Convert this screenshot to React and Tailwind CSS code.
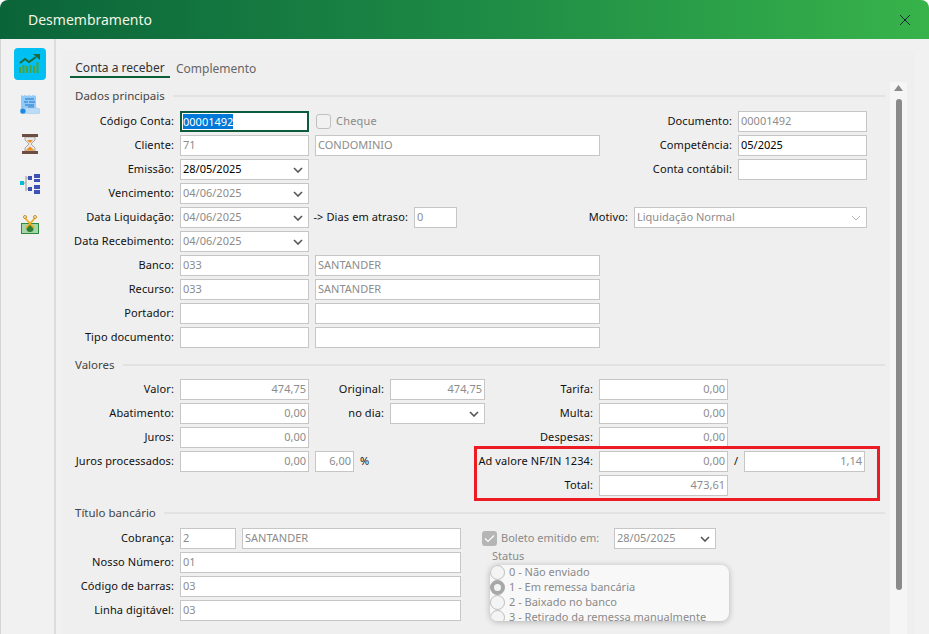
import React from 'react';

const Chevron = ({ light }) => (
  <svg width="10" height="6" viewBox="0 0 10 6" className="shrink-0">
    <path d="M1 1l4 4 4-4" fill="none" stroke={light ? '#b5b5b5' : '#555'} strokeWidth={light ? 1 : 1.6} />
  </svg>
);

const Field = ({ w, value, active, right, select, light, className = '' }) => (
  <div
    className={`h-[21px] shrink-0 flex items-center justify-between bg-white border border-[#c6c6c6] px-[2px] text-[11px] whitespace-nowrap overflow-hidden ${active ? 'text-black' : 'text-[#8c8c8c]'} ${className}`}
    style={{ width: w }}
  >
    {right ? <span className="ml-auto">{value}</span> : <span>{value}</span>}
    {select && <span className="mr-[3px] flex"><Chevron light={light} /></span>}
  </div>
);

const Label = ({ w, children, className = '' }) => (
  <div className={`shrink-0 text-right pr-[6px] text-[11px] tracking-[0.1px] text-[#111] whitespace-nowrap ${className}`} style={{ width: w }}>
    {children}
  </div>
);

const Row = ({ children }) => <div className="flex items-center h-[21px] mb-[3px]">{children}</div>;

const Section = ({ title, className = '' }) => (
  <div className={`flex items-center h-[18px] pl-[12px] ${className}`}>
    <span className="text-[11.5px] text-[#444] whitespace-nowrap">{title}</span>
    <div className="flex-1 h-[2px] bg-[#e2e2e2] ml-[8px]" />
  </div>
);

const Radio = ({ label, on }) => (
  <div className="flex items-center h-[15px] shrink-0">
    <span className={`w-[15px] h-[15px] rounded-full bg-[#f4f4f4] shrink-0 ${on ? 'border-[4px] border-[#a8a8a8]' : 'border border-[#bcbcbc]'}`} />
    <span className="ml-[4px] text-[11px] text-[#8a8a8a] whitespace-nowrap">{label}</span>
  </div>
);

const ChartIcon = () => (
  <svg width="22" height="20" viewBox="0 0 22 20">
    <path d="M1 19v-6M4.500 19v-8M8 19v-7M11.500 19v-8M15 19v-7M18.500 19v-11" stroke="#4aa23a" strokeWidth="2" />
    <path d="M1 9l5-4 4 3 7-5" fill="none" stroke="#1f6b35" strokeWidth="2" />
    <path d="M14 0h7v6z" fill="#1f6b35" />
  </svg>
);

const ScrollIcon = () => (
  <svg width="20" height="20" viewBox="0 0 20 20">
    <path d="M1 1l2 1 2-1 2 1 2-1 2 1 2-1 2 1 1-1v15H1z" fill="#90caf9" />
    <path d="M5 5h9M4 8h4M9 8h6M5 11h9M8 13h6" stroke="#1e73c8" strokeWidth="1.2" />
    <rect x="0" y="14" width="20" height="6" rx="3" fill="#bbdcf7" stroke="#a8c4dc" strokeWidth="0.6" />
    <circle cx="3" cy="17" r="2.600" fill="#1e88e5" />
  </svg>
);

const HourglassIcon = () => (
  <svg width="16" height="20" viewBox="0 0 16 20">
    <path d="M3 3h10v3l-4 4 4 4v3H3v-3l4-4-4-4z" fill="#e8e8e8" stroke="#a8a8a8" />
    <path d="M5 6h6l-3 3z" fill="#f28c1c" />
    <path d="M3.500 16.500l4.500-4 4.500 4z" fill="#f28c1c" />
    <rect width="16" height="3" fill="#6d4c41" />
    <rect y="17" width="16" height="3" fill="#6d4c41" />
  </svg>
);

const TreeIcon = () => (
  <svg width="20" height="20" viewBox="0 0 20 20">
    <rect y="7" width="4" height="4" fill="#00bcd4" />
    <path d="M4 9h2M6 2v15M6 4h2M6 15h2" stroke="#b5b5b5" strokeWidth="1.500" fill="none" />
    <g fill="#3f51b5">
      <rect x="8" y="2" width="4" height="4" />
      <rect x="8" y="13" width="4" height="4" />
      <rect x="14" y="0" width="6" height="4" />
      <rect x="14" y="5" width="6" height="3" />
      <rect x="14" y="11" width="6" height="4" />
      <rect x="14" y="16" width="6" height="4" />
    </g>
  </svg>
);

const MoneyIcon = () => (
  <svg width="18" height="19" viewBox="0 0 18 19">
    <rect x="0.500" y="8.500" width="17" height="10" fill="#a5d6a7" stroke="#2e8b3d" />
    <circle cx="9" cy="13.500" r="3.500" fill="#2e7d32" />
    <path d="M4 3l9 10M14 3L5 13" stroke="#f2a91f" strokeWidth="1.800" />
    <circle cx="4" cy="2" r="1.500" fill="none" stroke="#c98d1a" />
    <circle cx="14" cy="2" r="1.500" fill="none" stroke="#c98d1a" />
  </svg>
);

export default function App() {
  return (
    <div className="w-[929px] h-[634px] overflow-hidden bg-white font-['Noto_Sans',sans-serif]">
      <div className="h-full flex flex-col rounded-t-[8px] overflow-hidden bg-[#f1f1f1]">
        {/* title bar */}
        <div className="h-[39px] shrink-0 flex items-center justify-between pl-[28px] pr-[18px] bg-gradient-to-r from-[#0a6439] via-[#1d8a45] to-[#37b34a]">
          <span className="text-[14px] text-[#f3f5e6]">Desmembramento</span>
          <svg width="12" height="12" viewBox="0 0 12 12">
            <path d="M1 1l10 10M11 1L1 11" stroke="#123" strokeWidth="1" />
          </svg>
        </div>

        <div className="flex-1 flex min-h-0">
          {/* side menu */}
          <div className="w-[56px] shrink-0 border-l border-[#d5d5d5] border-r-2 border-r-[#dcdcdc] flex flex-col items-center pt-[9px] pl-[5px] gap-[8px]">
            <div className="w-[32px] h-[32px] rounded-[4px] bg-[#00bff3] flex items-center justify-center"><ChartIcon /></div>
            <div className="w-[32px] h-[32px] flex items-center justify-center"><ScrollIcon /></div>
            <div className="w-[32px] h-[32px] flex items-center justify-center"><HourglassIcon /></div>
            <div className="w-[32px] h-[32px] flex items-center justify-center"><TreeIcon /></div>
            <div className="w-[32px] h-[32px] flex items-center justify-center"><MoneyIcon /></div>
          </div>

          {/* main panel */}
          <div className="flex-1 min-w-0 mt-[11px] ml-[7px] mr-[14px] bg-[#efefef] flex flex-col">
            <div className="h-[28px] shrink-0 flex items-end pl-[7px]">
              <div className="w-[100px] h-[28px] border-b-2 border-[#0b5f37] text-center text-[12px] leading-[35px] text-[#333]">Conta a receber</div>
              <div className="ml-[6px] h-[28px] text-[12px] leading-[37px] text-[#666]">Complemento</div>
            </div>

            <div className="flex-1 flex min-h-0 relative pt-[4px]">
              <div className="w-[822px] shrink-0 overflow-hidden pt-[5px]">
                <Section title="Dados principais" />
                <div className="pr-[18px] mt-[6px]">
                  <Row>
                    <Label w={117}>Código Conta:</Label>
                    <div className="w-[129px] h-[21px] shrink-0 border-2 border-[#0b5b3c] bg-white flex items-center px-[1px] text-[11px]">
                      <span className="bg-[#0078d7] text-white leading-[15px]">00001492</span>
                    </div>
                    <span className="ml-[7px] w-[15px] h-[15px] rounded-[3px] border border-[#c0c0c0] bg-[#f1f1f1]" />
                    <span className="ml-[5px] text-[11px] tracking-[0.2px] text-[#8a8a8a]">Cheque</span>
                    <Label w={120} className="ml-auto">Documento:</Label>
                    <Field w={129} value="00001492" />
                  </Row>
                  <Row>
                    <Label w={117}>Cliente:</Label>
                    <Field w={129} value="71" />
                    <Field w={285} value="CONDOMINIO" className="ml-[6px]" />
                    <Label w={120} className="ml-auto">Competência:</Label>
                    <Field w={129} value="05/2025" active />
                  </Row>
                  <Row>
                    <Label w={117}>Emissão:</Label>
                    <Field w={129} value="28/05/2025" active select />
                    <Label w={120} className="ml-auto">Conta contábil:</Label>
                    <Field w={129} />
                  </Row>
                  <Row>
                    <Label w={117}>Vencimento:</Label>
                    <Field w={129} value="04/06/2025" select />
                  </Row>
                  <Row>
                    <Label w={117}>Data Liquidação:</Label>
                    <Field w={129} value="04/06/2025" select />
                    <Label w={105}>-&gt; Dias em atraso:</Label>
                    <Field w={43} value="0" />
                    <Label w={177}>Motivo:</Label>
                    <Field w={233} value="Liquidação Normal" select light />
                  </Row>
                  <Row>
                    <Label w={117}>Data Recebimento:</Label>
                    <Field w={129} value="04/06/2025" select />
                  </Row>
                  <Row>
                    <Label w={117}>Banco:</Label>
                    <Field w={129} value="033" />
                    <Field w={285} value="SANTANDER" className="ml-[6px]" />
                  </Row>
                  <Row>
                    <Label w={117}>Recurso:</Label>
                    <Field w={129} value="033" />
                    <Field w={285} value="SANTANDER" className="ml-[6px]" />
                  </Row>
                  <Row>
                    <Label w={117}>Portador:</Label>
                    <Field w={129} />
                    <Field w={285} className="ml-[6px]" />
                  </Row>
                  <Row>
                    <Label w={117}>Tipo documento:</Label>
                    <Field w={129} />
                    <Field w={285} className="ml-[6px]" />
                  </Row>
                </div>

                <Section title="Valores" className="mt-[8px]" />
                <div className="mt-[5px] relative">
                  <Row>
                    <Label w={117}>Valor:</Label>
                    <Field w={129} value="474,75" right />
                    <Label w={81}>Original:</Label>
                    <Field w={95} value="474,75" right />
                    <Label w={114}>Tarifa:</Label>
                    <Field w={129} value="0,00" right />
                  </Row>
                  <Row>
                    <Label w={117}>Abatimento:</Label>
                    <Field w={129} value="0,00" right />
                    <Label w={81}>no dia:</Label>
                    <Field w={95} select />
                    <Label w={114}>Multa:</Label>
                    <Field w={129} value="0,00" right />
                  </Row>
                  <Row>
                    <Label w={117}>Juros:</Label>
                    <Field w={129} value="0,00" right />
                    <Label w={290}>Despesas:</Label>
                    <Field w={129} value="0,00" right />
                  </Row>
                  <Row>
                    <Label w={117}>Juros processados:</Label>
                    <Field w={129} value="0,00" right />
                    <Field w={39} value="6,00" right className="ml-[6px]" />
                    <span className="ml-[6px] w-[29px] text-[11px] text-[#111]">%</span>
                    <Label w={210}>Ad valore NF/IN 1234:</Label>
                    <Field w={129} value="0,00" right />
                    <span className="w-[16px] text-center text-[11px] text-[#111]">/</span>
                    <Field w={121} value="1,14" right />
                  </Row>
                  <Row>
                    <Label w={536}>Total:</Label>
                    <Field w={129} value="473,61" right />
                  </Row>
                  {/* highlight drawn over the totals */}
                  <div className="absolute left-[411px] top-[67px] w-[406px] h-[55px] border-[3px] border-[#ed1c24] pointer-events-none" />
                </div>

                <Section title="Título bancário" className="mt-[8px]" />
                <div className="flex mt-[6px]">
                  <div className="w-[398px] shrink-0">
                    <Row>
                      <Label w={117}>Cobrança:</Label>
                      <Field w={56} value="2" />
                      <Field w={219} value="SANTANDER" className="ml-[6px]" />
                    </Row>
                    <Row>
                      <Label w={117}>Nosso Número:</Label>
                      <Field w={281} value="01" />
                    </Row>
                    <Row>
                      <Label w={117}>Código de barras:</Label>
                      <Field w={281} value="03" />
                    </Row>
                    <Row>
                      <Label w={117}>Linha digitável:</Label>
                      <Field w={281} value="03" />
                    </Row>
                  </div>
                  <div className="ml-[21px] w-[250px] shrink-0">
                    <div className="flex items-center h-[21px]">
                      <span className="w-[15px] h-[15px] rounded-[3px] bg-[#b5b5b5] flex items-center justify-center shrink-0">
                        <svg width="11" height="9" viewBox="0 0 11 9"><path d="M1 4.500l3 3 6-6" fill="none" stroke="#fff" strokeWidth="1.200" /></svg>
                      </span>
                      <span className="ml-[4px] w-[113px] text-[11px] text-[#8a8a8a] whitespace-nowrap">Boleto emitido em:</span>
                      <Field w={102} value="28/05/2025" select />
                    </div>
                    <div className="ml-[10px] h-[14px] text-[11px] leading-[14px] text-[#8a8a8a]">Status</div>
                    <div className="ml-[8px] mt-[2px] w-[239px] h-[56px] rounded-[8px] bg-[#f8f8f8] shadow-[0_1px_6px_rgba(0,0,0,0.25)] overflow-hidden flex flex-col">
                      <Radio label="0 - Não enviado" />
                      <Radio label="1 - Em remessa bancária" on />
                      <Radio label="2 - Baixado no banco" />
                      <Radio label="3 - Retirado da remessa manualmente" />
                    </div>
                  </div>
                </div>
              </div>

              {/* scrollbar */}
              <div className="w-[17px] shrink-0 ml-[5px] bg-[#f5f5f5] flex flex-col items-center">
                <svg width="9" height="6" viewBox="0 0 9 6" className="mt-[3px]"><path d="M4.500 0L9 6H0z" fill="#8a8a8a" /></svg>
                <div className="w-[6px] h-[491px] mt-[8px] rounded-full bg-[#8a8a8a]" />
              </div>
            </div>
          </div>
        </div>
      </div>
    </div>
  );
}
